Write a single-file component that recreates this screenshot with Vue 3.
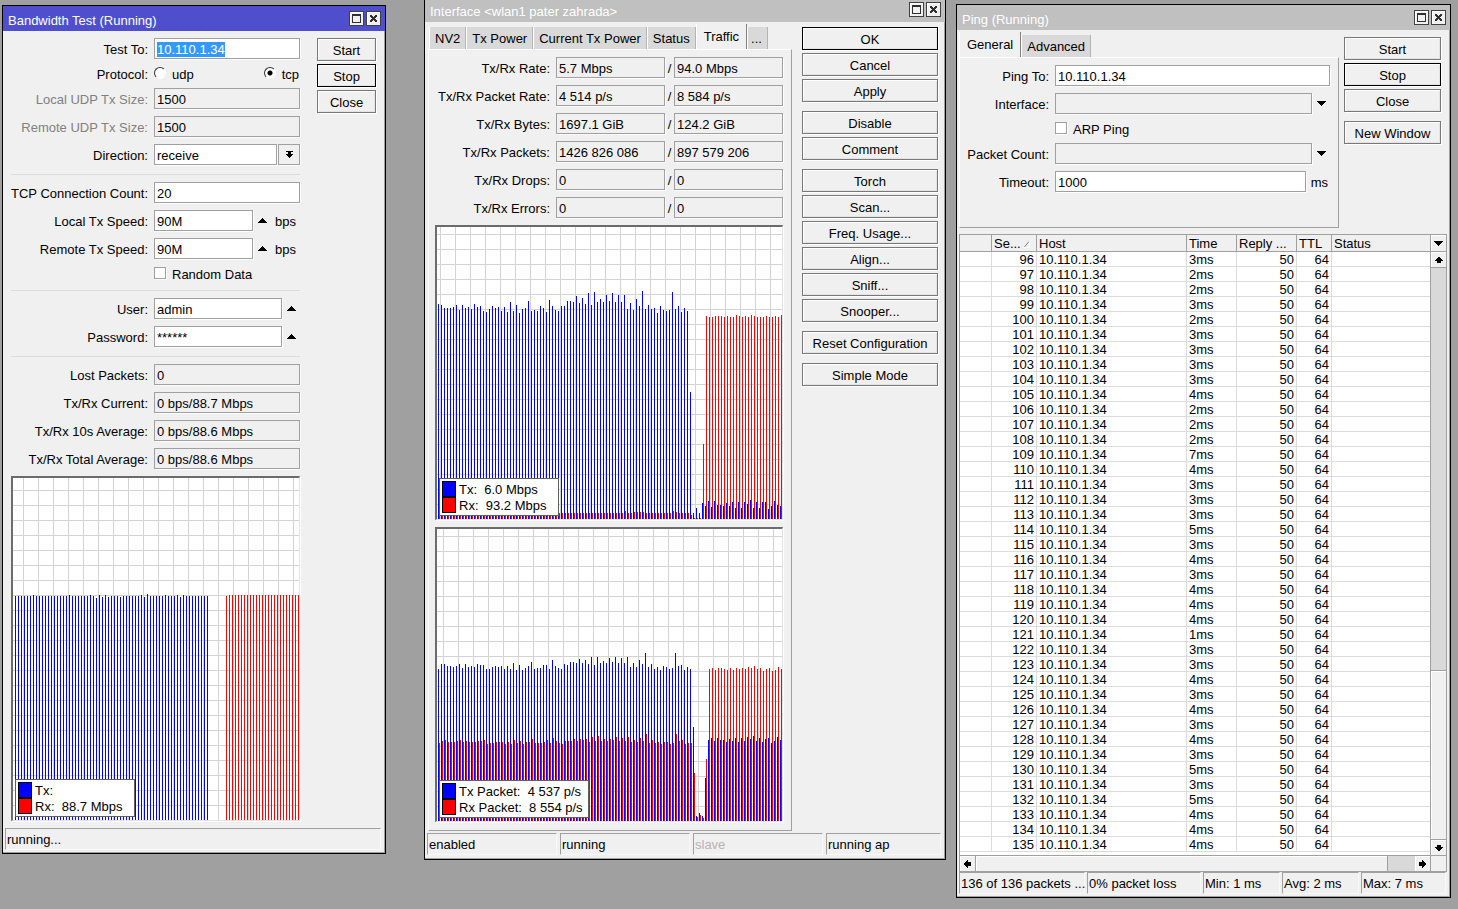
<script setup>
import { onMounted, ref } from 'vue'

const testTo = ref(null)
onMounted(() => {
  testTo.value.focus()
  testTo.value.select()
})

const BAR_STEP = 3
const GRID_STEP = 15

function barPath(tops, firstIndex, x0, height, ceiling) {
  return tops
    .map((top, i) => `M${x0 + BAR_STEP * (firstIndex + i)} ${top - ceiling}h1V${height}h-1z`)
    .join('')
}

function gridPath(width, height, x0, y0) {
  let d = ''
  for (let x = x0; x < width; x += GRID_STEP) d += `M${x} 0h1v${height}h-1z`
  for (let y = y0; y < height; y += GRID_STEP) d += `M0 ${y}h${width}v1H0z`
  return d
}

function makeChart({ width, height, gridX, gridY, x0, ceiling, tx, rx, rxFirst = 0, legend }) {
  return {
    width,
    height,
    legend,
    grid: gridPath(width, height, gridX, gridY),
    tx: barPath(tx, 0, x0, height, ceiling),
    rx: barPath(rx, rxFirst, x0 + 1, height, ceiling)
  }
}

const testTx = Array(65).fill(118)
for (const i of [6, 18, 25, 28, 30, 42, 50, 54, 56]) testTx[i] = 117
for (const i of [29, 31, 35, 43, 55]) testTx[i] = 119
testTx[27] = 120
testTx[44] = 116

const testChart = makeChart({
  width: 286,
  height: 342,
  gridX: 10,
  gridY: 12,
  x0: 2,
  ceiling: 0,
  tx: testTx,
  rx: [118, ...Array(24).fill(117)],
  rxFirst: 70,
  legend: [
    { kind: 'tx', text: 'Tx:' },
    { kind: 'rx', text: 'Rx:  88.7 Mbps' }
  ]
})

const rateTx = [
  84, 85, 88, 88, 88, 87, 85, 90, 85, 88, 87, 89, 84, 87, 86, 91, 92, 89, 86, 88, 87, 91, 87, 92, 82, 91, 85, 93, 89,
  88, 81, 91, 90, 91, 86, 88, 92, 80, 86, 90, 91, 86, 86, 81, 81, 82, 76, 83, 78, 84, 73, 85, 72, 82, 79, 82, 75, 81,
  73, 82, 75, 82, 75, 89, 83, 90, 79, 86, 71, 89, 85, 89, 88, 93, 86, 90, 91, 90, 72, 89, 86, 92, 88, 91, 172, 293,
  288, 293, 283, 286, 281, 287, 281, 285, 285, 286, 283, 286, 282, 288, 282, 288, 282, 284, 280, 288, 282, 288, 282,
  282, 289, 286, 281, 285, 286
]
const rateRx = [
  ...Array(62).fill(293), 291, 293, 293, 292, 292, 292, 292, ...Array(9).fill(293), 291, 292, 293, 293, 293, 293, 295,
  298, 298, 298, 224, 96, 97, 97, 96, 96, 96, 97, 96, 97, 97, 95, 96, 97, 96, 97, 95, 96, 97, 97, 97, 96, 97, 97, 96,
  97, 95
]
const packetTx = [
  149, 144, 144, 146, 146, 147, 146, 144, 148, 144, 147, 146, 147, 144, 145, 145, 149, 149, 147, 146, 147, 146, 149,
  146, 149, 143, 150, 145, 150, 148, 146, 142, 149, 148, 148, 145, 145, 149, 140, 146, 148, 149, 144, 145, 142, 142,
  143, 139, 143, 140, 144, 137, 145, 137, 143, 141, 143, 138, 142, 137, 143, 138, 143, 137, 147, 143, 147, 140, 144,
  133, 147, 144, 149, 147, 150, 146, 147, 149, 148, 133, 146, 145, 150, 147, 149, 207, 296, 293, 296, 258, 220, 218,
  221, 218, 220, 220, 222, 219, 221, 218, 222, 218, 221, 217, 219, 216, 221, 218, 222, 219, 218, 223, 221, 217, 220
]
const packetRx = [
  223, 221, 220, 222, 222, 222, 221, 220, 222, 221, 222, 222, 222, 221, 221, 220, 224, 223, 223, 222, 222, 222, 224,
  222, 224, 220, 223, 221, 224, 222, 222, 219, 223, 223, 223, 222, 220, 223, 218, 221, 223, 224, 221, 221, 221, 219,
  221, 219, 220, 219, 222, 217, 221, 216, 221, 219, 221, 219, 220, 217, 221, 218, 221, 217, 222, 220, 222, 218, 221,
  214, 223, 220, 223, 222, 224, 222, 222, 224, 223, 214, 221, 220, 224, 223, 223, 253, 297, 295, 298, 239, 149, 148,
  150, 148, 148, 149, 150, 148, 150, 148, 149, 148, 149, 147, 148, 146, 149, 148, 151, 149, 148, 151, 150, 147, 149
]

const trafficCharts = [
  makeChart({
    width: 345,
    height: 292,
    gridX: 3,
    gridY: 7,
    x0: 1,
    ceiling: 7,
    tx: rateTx,
    rx: rateRx,
    legend: [
      { kind: 'tx', text: 'Tx:  6.0 Mbps' },
      { kind: 'rx', text: 'Rx:  93.2 Mbps' }
    ]
  }),
  makeChart({
    width: 345,
    height: 292,
    gridX: 6,
    gridY: 7,
    x0: 1,
    ceiling: 9,
    tx: packetTx,
    rx: packetRx,
    legend: [
      { kind: 'tx', text: 'Tx Packet:  4 537 p/s' },
      { kind: 'rx', text: 'Rx Packet:  8 554 p/s' }
    ]
  })
]

const results = [
  { id: 'lost', label: 'Lost Packets:', value: '0' },
  { id: 'current', label: 'Tx/Rx Current:', value: '0 bps/88.7 Mbps' },
  { id: 'avg10', label: 'Tx/Rx 10s Average:', value: '0 bps/88.6 Mbps' },
  { id: 'avgtotal', label: 'Tx/Rx Total Average:', value: '0 bps/88.6 Mbps' }
]

const counters = [
  { id: 'rate', label: 'Tx/Rx Rate:', tx: '5.7 Mbps', rx: '94.0 Mbps' },
  { id: 'prate', label: 'Tx/Rx Packet Rate:', tx: '4 514 p/s', rx: '8 584 p/s' },
  { id: 'bytes', label: 'Tx/Rx Bytes:', tx: '1697.1 GiB', rx: '124.2 GiB' },
  { id: 'packets', label: 'Tx/Rx Packets:', tx: '1426 826 086', rx: '897 579 206' },
  { id: 'drops', label: 'Tx/Rx Drops:', tx: '0', rx: '0' },
  { id: 'errors', label: 'Tx/Rx Errors:', tx: '0', rx: '0' }
]

const ifaceTabs = ['NV2', 'Tx Power', 'Current Tx Power', 'Status', 'Traffic', '...']
const ifaceButtons = [
  ['OK', 'Cancel', 'Apply'],
  ['Disable', 'Comment'],
  ['Torch', 'Scan...', 'Freq. Usage...', 'Align...', 'Sniff...', 'Snooper...'],
  ['Reset Configuration'],
  ['Simple Mode']
]

const times = [
  3, 2, 2, 3, 2, 3, 3, 3, 3, 4, 2, 2, 2, 7, 4, 3, 3, 3, 5, 3, 4, 3, 4, 4, 4, 1, 3, 3, 4, 3, 4, 3, 4, 3, 5, 3, 5, 4, 4,
  4
]
const replies = times.map((ms, i) => ({ seq: 96 + i, host: '10.110.1.34', time: `${ms}ms`, size: 50, ttl: 64 }))
</script>

<template>
  <main class="desktop">
    <section class="window win-test">
      <header class="titlebar active">
        <h2>Bandwidth Test (Running)</h2>
        <button class="sys" aria-label="Maximize"><svg width="13" height="13"><path d="M2 2h9v9H2zM3 4v6h7V4z" fill-rule="evenodd" /></svg></button>
        <button class="sys" aria-label="Close window"><svg width="13" height="13"><path d="M3 3h2v1h1v1h1V4h1V3h2v2H9v1H8v1h1v1h1v2H8V9H7V8H6v1H5v1H3V8h1V7h1V6H4V5H3z" /></svg></button>
      </header>
      <div class="body">
        <form class="form test-form" @submit.prevent>
          <div class="row">
            <label for="test-to">Test To:</label>
            <input id="test-to" ref="testTo" class="field" value="10.110.1.34" />
          </div>
          <div class="row low" role="radiogroup" aria-labelledby="proto">
            <span id="proto" class="name">Protocol:</span>
            <label class="choice"><input type="radio" name="proto" />udp</label>
            <label class="choice end"><input type="radio" name="proto" checked />tcp</label>
          </div>
          <div class="row">
            <label for="local-size" class="dim">Local UDP Tx Size:</label>
            <input id="local-size" class="field flat" value="1500" readonly />
          </div>
          <div class="row">
            <label for="remote-size" class="dim">Remote UDP Tx Size:</label>
            <input id="remote-size" class="field flat" value="1500" readonly />
          </div>
          <div class="row">
            <label for="direction">Direction:</label>
            <select id="direction" class="field"><option>receive</option></select>
            <button type="button" class="pick" aria-label="Choose direction"><svg width="7" height="8"><path d="M0 0h7v1H5v2h2v1H6v1H5v1H4v1H3V6H2V5H1V4H0V3h2V1H0z" /></svg></button>
          </div>
          <hr />
          <div class="row">
            <label for="tcp-count">TCP Connection Count:</label>
            <input id="tcp-count" class="field" value="20" />
          </div>
          <div class="row">
            <label for="local-speed">Local Tx Speed:</label>
            <input id="local-speed" class="field" value="90M" />
            <button type="button" class="arrow" aria-label="Clear local speed"><svg width="9" height="5"><path d="M4 0h1v1h1v1h1v1h1v1h1v1H0V4h1V3h1V2h1V1h1z" /></svg></button>
            <span class="unit">bps</span>
          </div>
          <div class="row">
            <label for="remote-speed">Remote Tx Speed:</label>
            <input id="remote-speed" class="field" value="90M" />
            <button type="button" class="arrow" aria-label="Clear remote speed"><svg width="9" height="5"><path d="M4 0h1v1h1v1h1v1h1v1h1v1H0V4h1V3h1V2h1V1h1z" /></svg></button>
            <span class="unit">bps</span>
          </div>
          <div class="row low">
            <span class="name"></span>
            <label class="choice"><input type="checkbox" />Random Data</label>
          </div>
          <hr />
          <div class="row">
            <label for="user">User:</label>
            <input id="user" class="field" value="admin" />
            <button type="button" class="arrow" aria-label="Clear user"><svg width="9" height="5"><path d="M4 0h1v1h1v1h1v1h1v1h1v1H0V4h1V3h1V2h1V1h1z" /></svg></button>
          </div>
          <div class="row">
            <label for="password">Password:</label>
            <input id="password" class="field" value="******" />
            <button type="button" class="arrow" aria-label="Clear password"><svg width="9" height="5"><path d="M4 0h1v1h1v1h1v1h1v1h1v1H0V4h1V3h1V2h1V1h1z" /></svg></button>
          </div>
          <hr />
          <div v-for="r in results" :key="r.id" class="row">
            <label :for="r.id">{{ r.label }}</label>
            <input :id="r.id" class="field flat" :value="r.value" readonly />
          </div>
          <div class="chart">
            <svg :viewBox="`0 0 ${testChart.width} ${testChart.height}`" :width="testChart.width" :height="testChart.height">
              <path class="grid" :d="testChart.grid" />
              <path class="tx" :d="testChart.tx" />
              <path class="rx" :d="testChart.rx" />
            </svg>
            <ul class="legend">
              <li v-for="l in testChart.legend" :key="l.kind"><i :class="l.kind"></i>{{ l.text }}</li>
            </ul>
          </div>
        </form>
        <div class="actions">
          <button>Start</button>
          <button class="default">Stop</button>
          <button>Close</button>
        </div>
      </div>
      <footer class="status"><span>running...</span></footer>
    </section>

    <section class="window win-iface">
      <header class="titlebar">
        <h2>Interface &lt;wlan1 pater zahrada&gt;</h2>
        <button class="sys" aria-label="Maximize"><svg width="13" height="13"><path d="M2 2h9v9H2zM3 4v6h7V4z" fill-rule="evenodd" /></svg></button>
        <button class="sys" aria-label="Close window"><svg width="13" height="13"><path d="M3 3h2v1h1v1h1V4h1V3h2v2H9v1H8v1h1v1h1v2H8V9H7V8H6v1H5v1H3V8h1V7h1V6H4V5H3z" /></svg></button>
      </header>
      <div class="body">
        <div class="tabbed">
          <nav class="tabs">
            <button v-for="t in ifaceTabs" :key="t" :class="{ current: t === 'Traffic', more: t === '...' }">{{ t }}</button>
          </nav>
          <form class="form panel" @submit.prevent>
            <div v-for="c in counters" :key="c.id" class="row">
              <label :for="c.id">{{ c.label }}</label>
              <input :id="c.id" class="field flat" :value="c.tx" readonly />
              <span class="slash">/</span>
              <input class="field flat" :value="c.rx" :aria-label="c.label" readonly />
            </div>
            <div v-for="(chart, i) in trafficCharts" :key="i" class="chart">
              <svg :viewBox="`0 0 ${chart.width} ${chart.height}`" :width="chart.width" :height="chart.height">
                <path class="grid" :d="chart.grid" />
                <path class="tx" :d="chart.tx" />
                <path class="rx" :d="chart.rx" />
              </svg>
              <ul class="legend">
                <li v-for="l in chart.legend" :key="l.kind"><i :class="l.kind"></i>{{ l.text }}</li>
              </ul>
            </div>
          </form>
        </div>
        <div class="actions">
          <div v-for="(group, g) in ifaceButtons" :key="g" class="group">
            <button v-for="b in group" :key="b" :class="{ default: b === 'OK' }">{{ b }}</button>
          </div>
        </div>
      </div>
      <footer class="status">
        <span>enabled</span>
        <span>running</span>
        <span class="off">slave</span>
        <span>running ap</span>
      </footer>
    </section>

    <section class="window win-ping">
      <header class="titlebar">
        <h2>Ping (Running)</h2>
        <button class="sys" aria-label="Maximize"><svg width="13" height="13"><path d="M2 2h9v9H2zM3 4v6h7V4z" fill-rule="evenodd" /></svg></button>
        <button class="sys" aria-label="Close window"><svg width="13" height="13"><path d="M3 3h2v1h1v1h1V4h1V3h2v2H9v1H8v1h1v1h1v2H8V9H7V8H6v1H5v1H3V8h1V7h1V6H4V5H3z" /></svg></button>
      </header>
      <div class="body">
        <div class="tabbed">
          <nav class="tabs">
            <button class="current">General</button>
            <button>Advanced</button>
          </nav>
          <form class="form panel" @submit.prevent>
            <div class="row">
              <label for="ping-to">Ping To:</label>
              <input id="ping-to" class="field" value="10.110.1.34" />
            </div>
            <div class="row">
              <label for="iface">Interface:</label>
              <input id="iface" class="field flat" />
              <button type="button" class="arrow" aria-label="Choose interface"><svg width="9" height="5"><path d="M0 0h9v1H8v1H7v1H6v1H5v1H4V4H3V3H2V2H1V1H0z" /></svg></button>
            </div>
            <div class="row low">
              <span class="name"></span>
              <label class="choice"><input type="checkbox" />ARP Ping</label>
            </div>
            <div class="row">
              <label for="count">Packet Count:</label>
              <input id="count" class="field flat" />
              <button type="button" class="arrow" aria-label="Set packet count"><svg width="9" height="5"><path d="M0 0h9v1H8v1H7v1H6v1H5v1H4V4H3V3H2V2H1V1H0z" /></svg></button>
            </div>
            <div class="row">
              <label for="timeout">Timeout:</label>
              <input id="timeout" class="field" value="1000" />
              <span class="unit">ms</span>
            </div>
          </form>
        </div>
        <div class="actions">
          <div class="group">
            <button>Start</button>
            <button class="default">Stop</button>
            <button>Close</button>
          </div>
          <div class="group"><button>New Window</button></div>
        </div>
      </div>
      <div class="list">
        <table>
          <colgroup>
            <col class="c-flag" /><col class="c-seq" /><col class="c-host" /><col class="c-time" /><col class="c-size" /><col class="c-ttl" /><col />
          </colgroup>
          <thead>
            <tr>
              <th></th>
              <th><span class="sorted">Se...<svg width="7" height="7"><path d="M0 6.500L5 .5" stroke="#808080" fill="none" /><path d="M5.500 0v6.500H0" stroke="#fff" fill="none" /></svg></span></th>
              <th>Host</th>
              <th>Time</th>
              <th>Reply ...</th>
              <th>TTL</th>
              <th>Status</th>
            </tr>
          </thead>
          <tbody>
            <tr v-for="r in replies" :key="r.seq">
              <td></td>
              <td class="num">{{ r.seq }}</td>
              <td>{{ r.host }}</td>
              <td>{{ r.time }}</td>
              <td class="num">{{ r.size }}</td>
              <td class="num">{{ r.ttl }}</td>
              <td></td>
            </tr>
          </tbody>
        </table>
        <div class="vscroll">
          <button class="menu" aria-label="Columns"><svg width="9" height="5"><path d="M0 0h9v1H8v1H7v1H6v1H5v1H4V4H3V3H2V2H1V1H0z" /></svg></button>
          <button aria-label="Scroll up"><svg width="8" height="6"><path d="M3 0h2v1h1v1h1v1h1v1H6v2H2V4H0V3h1V2h1V1h1z" /></svg></button>
          <div class="track"></div>
          <div class="thumb"></div>
          <button aria-label="Scroll down"><svg width="8" height="6"><path d="M2 0h4v2h2v1H7v1H6v1H5v1H3V5H2V4H1V3H0V2h2z" /></svg></button>
        </div>
        <div class="hscroll">
          <button aria-label="Scroll left"><svg width="7" height="8"><path d="M4 0v2h3v4H4v2H3V7H2V6H1V5H0V3h1V2h1V1h1V0z" /></svg></button>
          <div class="thumb"></div>
          <div class="track"></div>
          <button aria-label="Scroll right"><svg width="7" height="8"><path d="M3 0h1v1h1v1h1v1h1v2H6v1H5v1H4v1H3V6H0V2h3z" /></svg></button>
        </div>
        <div class="corner"></div>
      </div>
      <footer class="status">
        <span>136 of 136 packets ...</span>
        <span>0% packet loss</span>
        <span>Min: 1 ms</span>
        <span>Avg: 2 ms</span>
        <span>Max: 7 ms</span>
      </footer>
    </section>
  </main>
</template>

<style>
body {
  background: #a0a0a0;
}
</style>

<style scoped>
* {
  box-sizing: border-box;
}
.desktop {
  position: relative;
  min-height: 100vh;
  overflow: hidden;
  background: #a0a0a0;
  color: #000;
  font: 13px/15px 'Liberation Sans', Arial, sans-serif;
}
button,
input,
select {
  margin: 0;
  border-radius: 0;
  color: inherit;
  font: inherit;
}
svg {
  display: block;
  flex: none;
  shape-rendering: crispEdges;
}

/* windows */
.window {
  position: absolute;
  display: flex;
  flex-direction: column;
  border: 1px solid #000;
  background: #f0f0f0;
  box-shadow: inset -1px -1px 0 #a0a0a0;
}
.win-test {
  left: 2px;
  top: 5px;
  width: 384px;
  padding-bottom: 3px;
}
.win-iface {
  left: 424px;
  top: -4px;
  width: 522px;
  padding-bottom: 4px;
}
.win-ping {
  left: 956px;
  top: 4px;
  width: 495px;
  padding-bottom: 3px;
}
.titlebar {
  display: flex;
  gap: 2px;
  height: 25px;
  padding: 5px 4px 0 5px;
  background: #c0c0c0;
  color: #fff;
}
.titlebar.active {
  background: #4f4fcd;
}
.titlebar h2 {
  flex: 1;
  margin: 0;
  padding-top: 2px;
  font: inherit;
}
.sys {
  width: 15px;
  height: 15px;
  padding: 0;
  border: 1px solid #404040;
  background: #f0f0f0;
  box-shadow: inset 1px 1px 0 #fff;
  fill: #303030;
}
.body {
  display: flex;
}
.win-test .body {
  gap: 17px;
  padding: 7px 9px 7px 8px;
}
.win-iface .body {
  gap: 10px;
  padding: 2px 7px 2px 3px;
}
.win-ping .body {
  gap: 5px;
  padding: 2px 9px 6px 2px;
}

/* command buttons */
.actions {
  display: flex;
  flex: none;
  flex-direction: column;
  gap: 3px;
}
.win-test .actions {
  width: 59px;
}
.win-iface .actions {
  gap: 9px;
  width: 136px;
  padding-top: 3px;
}
.win-ping .actions {
  gap: 9px;
  width: 97px;
  padding-top: 5px;
}
.group {
  display: flex;
  flex-direction: column;
  gap: 3px;
}
.actions button {
  height: 23px;
  padding: 1px 0 0;
  border: 1px solid #787878;
  background: #f0f0f0;
  box-shadow: inset 1px 1px 0 #fff, inset -1px -1px 0 #e3e3e3, 1px 1px 0 #fff;
  white-space: nowrap;
}
.actions .default {
  border-color: #000;
}

/* forms */
.form {
  display: flex;
  flex: 1;
  flex-direction: column;
  gap: 7px;
  min-width: 0;
}
.row {
  display: flex;
  align-items: center;
  height: 21px;
}
.row.low {
  height: 15px;
}
.row > label:first-child,
.row > .name {
  flex: none;
  width: 137px;
  margin-right: 6px;
  padding-top: 1px;
  text-align: right;
  white-space: nowrap;
}
.win-iface .row > label:first-child {
  width: 115px;
}
.win-ping .row > label:first-child,
.win-ping .row > .name {
  width: 89px;
}
.dim {
  color: #808080;
}
.field {
  flex: 1;
  width: 0;
  min-width: 0;
  height: 21px;
  padding: 2px 2px 1px;
  border: 1px solid #a0a0a0;
  outline: none;
  background: #fff;
  box-shadow: 1px 1px 0 #fff;
  appearance: none;
}
.field::selection {
  background: #3399ff;
  color: #fff;
}
.flat {
  background: #f0f0f0;
}
.pick {
  display: grid;
  place-items: center;
  width: 22px;
  height: 21px;
  margin-left: 1px;
  padding: 0;
  border: 1px solid #a0a0a0;
  background: #f0f0f0;
  box-shadow: 1px 1px 0 #fff;
}
.arrow {
  display: grid;
  place-items: center;
  width: 18px;
  height: 21px;
  padding: 0;
  border: 0;
  background: none;
}
.unit {
  padding: 1px 2px 0 4px;
}
.win-test .unit {
  padding-right: 4px;
}
.win-ping .unit {
  padding-left: 5px;
}
.slash {
  width: 9px;
  padding-top: 1px;
  text-align: center;
}
.choice {
  display: flex;
  gap: 6px;
  padding-top: 1px;
}
.choice.end {
  margin-right: 1px;
  margin-left: auto;
}
.choice input {
  width: 12px;
  height: 12px;
  border: 1px solid #a0a0a0;
  background: #fff;
  box-shadow: 1px 1px 0 #fff;
  appearance: none;
}
.choice input[type='radio'] {
  border-color: #303030 #fff #fff #303030;
  border-radius: 50%;
  box-shadow: none;
}
.choice input[type='radio']:checked {
  background: radial-gradient(circle, #000 2px, #fff 3px);
}
hr {
  width: 100%;
  height: 3px;
  margin: 0;
  border: 0;
  border-bottom: 1px solid #dcdcdc;
}

/* charts */
.chart {
  position: relative;
  overflow: hidden;
  border: 1px solid #e3e3e3;
  border-top: 2px solid #6c6c6c;
  border-left: 2px solid #6c6c6c;
  background: #fff;
  box-shadow: 1px 1px 0 #fff;
}
.grid {
  fill: #d3d3d3;
}
.tx {
  fill: #00f;
  background: #00f;
}
.rx {
  fill: #f00;
  background: #f00;
}
.legend {
  position: absolute;
  bottom: 3px;
  left: 2px;
  min-width: 120px;
  margin: 0;
  padding: 2px 5px 2px 2px;
  border: 1px solid #606060;
  background: #fff;
  list-style: none;
}
.legend li {
  display: flex;
  gap: 3px;
  height: 16px;
  line-height: 18px;
  white-space: pre;
}
.legend i {
  width: 14px;
  border: 1px solid #000;
}

/* tabs */
.tabbed {
  display: flex;
  flex: 1;
  flex-direction: column;
  min-width: 0;
}
.tabs {
  display: flex;
  align-items: flex-end;
  height: 25px;
  padding-left: 1px;
}
.tabs button {
  height: 22px;
  padding: 1px 5px 0;
  border: 0;
  border-left: 1px solid #fff;
  border-right: 1px solid #b4b4b4;
  background: #d9d9d9;
  white-space: nowrap;
}
.tabs .current {
  height: 25px;
  padding: 0 7px 1px;
  border-right-color: #808080;
  background: #f0f0f0;
}
.tabs .more {
  padding: 1px 5px 0 3px;
}
.panel {
  padding: 7px 8px 8px 6px;
  border: 1px solid #a0a0a0;
  border-top-color: #fff;
  border-left-color: #fff;
}
.win-ping .tabs {
  padding-left: 0;
}
.win-ping .panel {
  padding: 7px 8px 35px 0;
}

/* status bars */
.status {
  display: flex;
  gap: 3px;
  padding: 0 4px 0 2px;
}
.status span {
  flex: 1;
  height: 22px;
  padding: 3px 0 0 1px;
  border: 1px solid #f8f8f8;
  border-top-color: #a0a0a0;
  border-left-color: #a0a0a0;
  white-space: nowrap;
}
.win-iface .status span {
  flex: none;
  width: 130px;
}
.win-iface .status span:last-child {
  flex: 1;
}
.status .off {
  color: #b4b4b4;
}
.win-ping .status {
  gap: 2px;
}
.win-ping .status span {
  flex: none;
}
.win-ping .status span:nth-child(1) {
  width: 126px;
}
.win-ping .status span:nth-child(2) {
  width: 114px;
}
.win-ping .status span:nth-child(3) {
  width: 77px;
}
.win-ping .status span:nth-child(4) {
  width: 77px;
}
.win-ping .status span:nth-child(5) {
  flex: 1;
}

/* reply list */
.list {
  display: grid;
  grid-template-columns: 1fr 16px;
  margin: 0 3px 0 2px;
  border: 1px solid #a0a0a0;
  background: #fff;
}
table {
  width: 100%;
  margin-bottom: 3px;
  border-collapse: separate;
  border-spacing: 0;
  table-layout: fixed;
}
.c-flag {
  width: 32px;
}
.c-seq {
  width: 45px;
}
.c-host {
  width: 150px;
}
.c-time {
  width: 50px;
}
.c-size {
  width: 60px;
}
.c-ttl {
  width: 35px;
}
th,
td {
  height: 15px;
  padding: 2px 2px 0;
  border-right: 1px solid #dcdcdc;
  border-bottom: 1px solid #dcdcdc;
  font-weight: normal;
  line-height: 12px;
  text-align: left;
  white-space: nowrap;
}
th {
  height: 17px;
  border-color: #a0a0a0;
  background: #f0f0f0;
  line-height: 14px;
}
th:last-child,
td:last-child {
  border-right: 0;
}
.num {
  text-align: right;
}
.sorted {
  display: flex;
  align-items: center;
  justify-content: space-between;
  padding-right: 3px;
}
.sorted svg {
  shape-rendering: auto;
}
.vscroll,
.hscroll {
  display: flex;
  background: #d9d9d9;
}
.vscroll {
  flex-direction: column;
  border-left: 1px solid #a0a0a0;
}
.hscroll,
.corner {
  height: 16px;
  border-top: 1px solid #a0a0a0;
}
.corner {
  border-left: 1px solid #a0a0a0;
  background: #f0f0f0;
}
.vscroll button,
.hscroll button,
.thumb {
  flex: none;
  background: #f0f0f0;
  box-shadow: inset 1px 1px 0 #fff;
}
.vscroll button,
.hscroll button {
  display: grid;
  place-items: center;
  padding: 0;
  border: 0;
}
.vscroll button {
  height: 16px;
  border-bottom: 1px solid #a0a0a0;
}
.vscroll .menu {
  height: 17px;
}
.vscroll .track {
  flex: 403;
}
.vscroll .thumb {
  flex: 168;
  border-top: 1px solid #a0a0a0;
  border-bottom: 1px solid #a0a0a0;
}
.vscroll button:last-child {
  height: 15px;
  border-bottom: 0;
}
.hscroll button {
  width: 16px;
  border-right: 1px solid #a0a0a0;
}
.hscroll .thumb {
  flex: 411;
  border-right: 1px solid #a0a0a0;
}
.hscroll .track {
  flex: 27;
}
.hscroll button:last-child {
  width: 15px;
  border-right: 0;
}
</style>
